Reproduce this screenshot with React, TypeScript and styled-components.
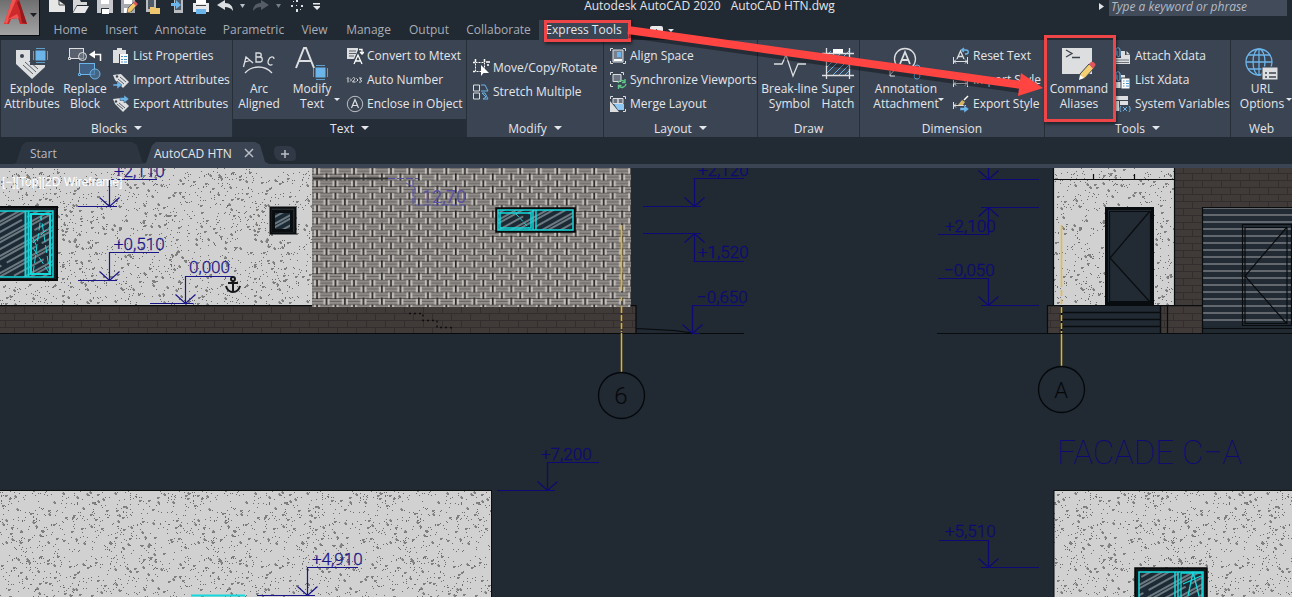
import React from "react";
import styled, { createGlobalStyle } from "styled-components";

const c = {
  frame: "#212932",
  panel: "#3b4453",
  line: "#262e38",
  text: "#e3e6ea",
  dim: "#a9aeb6",
  icon: "#dcdee0",
  blue: "#6cb5ea",
  red: "#ee4549",
  ink: "#1a1687",
  inkDark: "#0d0a75",
  cyan: "#14d9dc",
};

const GlobalStyle = createGlobalStyle`
  * { box-sizing: border-box; }
  html, body, #root { margin: 0; height: 100%; }
  body { background: ${c.frame}; color: ${c.text}; font: 12px/15px "Open Sans", "Noto Sans", sans-serif; overflow: hidden; }
  button, input { font: inherit; color: inherit; border: 0; padding: 0; margin: 0; background: none; }
`;

const Shell = styled.div`
  position: relative;
  display: flex;
  flex-direction: column;
  min-height: 100vh;
`;

const Header = styled.header`
  display: grid;
  grid-template-columns: 44px minmax(0, 1fr);
  height: 40px;
`;

const AppMenu = styled.button`
  width: 40px;
  height: 36px;
  background: linear-gradient(#6f6f6f, #a3a3a3);
  border-right: 1px solid #0c0f12;
  border-bottom: 1px solid #0c0f12;
  svg { display: block; }
`;

const HeaderRows = styled.div`
  display: grid;
  grid-template-rows: 20px 20px;
`;

const TitleBar = styled.div`
  display: flex;
  align-items: flex-start;
`;

const QuickAccess = styled.div`
  flex: 0 0 276px;
  height: 16px;
  overflow: hidden;
  svg { display: block; }
`;

const Title = styled.h1`
  flex: 1;
  display: flex;
  justify-content: center;
  gap: 10px;
  margin: 0;
  font-size: 12px;
  font-weight: 400;
  line-height: 12px;
  white-space: nowrap;
`;

const Search = styled.label`
  display: flex;
  flex: 0 0 193px;
  height: 16px;
`;

const SearchBox = styled.input`
  width: 178px;
  margin-left: 4px;
  padding: 0 2px 4px;
  background: #414b5a;
  font-size: 12px;
  font-style: italic;
  &::placeholder { color: #b4bac3; opacity: 1; }
`;

const MenuTabs = styled.nav`
  display: flex;
`;

const MenuTab = styled.button<{ $w: number; $active?: boolean }>`
  position: relative;
  width: ${(p) => p.$w}px;
  height: 20px;
  line-height: 20px;
  white-space: nowrap;
  color: ${(p) => (p.$active ? c.text : c.dim)};
  background: ${(p) => (p.$active ? c.panel : "none")};
`;

const Highlight = styled.span`
  position: absolute;
  inset: 0 -3px -2px 5px;
  border: 3px solid ${c.red};
  box-shadow: 1px 2px 3px rgba(0, 0, 0, 0.5);
  pointer-events: none;
`;

const CommandHighlight = styled(Highlight)`
  inset: -9px -4px -6px -2px;
`;

const ToggleButton = styled.button`
  display: flex;
  align-items: center;
  gap: 4px;
  margin-left: 20px;
`;

const Ribbon = styled.section`
  display: grid;
  grid-template-columns: 231fr 233fr 136fr 153fr 101fr 184fr 185fr 61fr;
  gap: 1px;
  padding-left: 1px;
  height: 97px;
  background: ${c.line};
`;

const Panel = styled.div`
  display: flex;
  flex-direction: column;
  min-width: 0;
  background: ${c.panel};
`;

const PanelBody = styled.div<{ $pad?: number }>`
  display: flex;
  align-items: center;
  flex: 1;
  padding-left: ${(p) => p.$pad ?? 1}px;
`;

const PanelFooter = styled.button<{ $dark?: boolean }>`
  display: flex;
  align-items: center;
  justify-content: center;
  gap: 7px;
  height: 18px;
  background: ${(p) => (p.$dark ? "#252d38" : "none")};
`;

const Caret = styled.span<{ $size?: number }>`
  border: ${(p) => p.$size ?? 4}px solid transparent;
  border-top-color: currentColor;
  border-bottom: 0;
`;

const BigButton = styled.button<{ $w: number }>`
  position: relative;
  flex: 0 0 ${(p) => p.$w}px;
  height: 72px;
  padding-top: 3px;
  display: flex;
  flex-direction: column;
  align-items: center;
  line-height: 15px;
  white-space: nowrap;
  svg { display: block; }
`;

const SideCaret = styled.span`
  position: absolute;
  right: 0;
  bottom: 15px;
  border: 3px solid transparent;
  border-top-color: currentColor;
  border-bottom: 0;
`;

const SmallList = styled.div<{ $gap?: number }>`
  display: flex;
  flex-direction: column;
  margin-left: ${(p) => p.$gap ?? 4}px;
`;

const SmallButton = styled.button`
  display: flex;
  align-items: center;
  gap: 3px;
  height: 24px;
  white-space: nowrap;
  svg { flex: 0 0 18px; }
`;

const FileBar = styled.div`
  display: flex;
  align-items: flex-end;
  height: 31px;
  padding-left: 12px;
  background: #222a34;
  border-bottom: 4px solid ${c.panel};
`;

const FileTab = styled.button<{ $active?: boolean }>`
  position: relative;
  display: flex;
  align-items: center;
  gap: 12px;
  width: ${(p) => (p.$active ? 127 : 134)}px;
  height: 22px;
  margin-left: ${(p) => (p.$active ? -4 : 0)}px;
  padding-left: ${(p) => (p.$active ? 12 : 18)}px;
  color: ${(p) => (p.$active ? c.text : "#b7bcc4")};
  background: ${(p) => (p.$active ? c.panel : "#2d3540")};
  clip-path: polygon(0 100%, 4px 96%, 10px 15%, 14px 0, calc(100% - 14px) 0, calc(100% - 9px) 12%, calc(100% - 4px) 90%, 100% 100%);
`;

const AddTab = styled.button`
  width: 22px;
  height: 15px;
  margin: 0 0 3px 5px;
  border-radius: 4px 8px 4px 8px;
  background: #303945;
  svg { display: block; margin: auto; }
`;

const Canvas = styled.main`
  flex: 1;
  display: flex;
  min-height: 429px;
  background: ${c.frame};
  svg { display: block; width: 100%; height: auto; min-height: 429px; }
`;

const Annotation = styled.svg`
  position: absolute;
  left: 0;
  top: 0;
  width: 100%;
  height: 140px;
  pointer-events: none;
`;

/* ---------- ribbon icons ---------- */

const Big = ({ children }: { children: React.ReactNode }) => (
  <svg width="34" height="34" viewBox="0 0 34 34" fill="none" stroke={c.icon} strokeWidth="1">{children}</svg>
);
const Small = ({ children }: { children: React.ReactNode }) => (
  <svg width="18" height="18" viewBox="0 0 18 18" fill="none" stroke={c.icon} strokeWidth="1">{children}</svg>
);

const BlueBlock = ({ x, y }: { x: number; y: number }) => (
  <g transform={`translate(${x} ${y})`} stroke={c.blue}>
    <rect x="3" y="3" width="9" height="9" fill={c.blue} />
    <path d="M3 .5h9M3 14.5h9M.5 3v9M14.5 3v9" strokeOpacity=".8" />
  </g>
);

const TagShape = <path d="M1 4l8-1 8 8-6 6-8-8z" fill={c.icon} stroke="none" />;

const I = {
  explode: (
    <Big>
      <path d="M1 3h14v15h15v2L17 32 1 17z" fill={c.icon} stroke="none" />
      <circle cx="7" cy="9" r="2" fill={c.panel} stroke="none" />
      <path d="M8 18l10 9M10 15l11 10M14 14l9 8" stroke="#59606b" />
      <rect x="16" y="1" width="18" height="17" fill={c.panel} stroke="none" />
      <BlueBlock x={18} y={1} />
    </Big>
  ),
  replace: (
    <Big>
      <rect x="1.500" y="1.500" width="14" height="10" fill="#59616e" />
      <circle cx="14.500" cy="9.500" r="4" fill="#6c7480" fillOpacity=".6" />
      <path d="M32.500 14V7.500H25" strokeWidth="1.500" stroke="#fff" />
      <path d="M21 7.500l6-4v8z" fill="#fff" stroke="none" />
      <path d="M0.500 10.500h2v2h-2z" fill={c.panel} />
      <g stroke={c.blue}>
        <rect x="11.500" y="16.500" width="15" height="11" fill="#3f6286" />
        <circle cx="27" cy="27" r="5" fill="#4c7397" fillOpacity=".7" />
        <path d="M10.500 26.500h2v2h-2z" fill={c.panel} />
      </g>
    </Big>
  ),
  arc: (
    <Big>
      <path d="M1.500 20L4 10l7 6M3 15l5-1.500M14 6h3c3 0 3 4 0 4h-3zM14 10h4c3 0 3 5 0 5h-4zM14 6v9M32 12c0-3-4-3-5.500 1s1 6 4 4.500" strokeWidth="1.300" />
      <path d="M3 26C10 18 23 18 30 26" strokeWidth="1.300" />
    </Big>
  ),
  modify: (
    <Big>
      <path d="M1 21L9 1h2l8 20M4 14h12" strokeWidth="2" />
      <BlueBlock x={18} y={18} />
    </Big>
  ),
  breakline: (
    <Big>
      <path d="M1 17h8l4-9 7 21 5-12h8" strokeWidth="1.300" />
    </Big>
  ),
  hatch: (
    <Big>
      <path d="M6 8L10 4M6 14L16 4M6 20L22 4M6 26L28 4M12 28L28 12M18 28L28 18M24 28l4-4" stroke={c.blue} />
      <path d="M1 6.500h32M1 28.500h32M5.500 1v31M28.500 1v31" strokeWidth="1.300" />
      <path d="M12 2h10v4H12z" fill="#fff" stroke="none" />
    </Big>
  ),
  annotation: (
    <Big>
      <circle cx="16" cy="12" r="10.500" strokeWidth="1.300" />
      <path d="M11 17l5-12 5 12M13 13h6" strokeWidth="1.800" />
      <path d="M8 20l-7 8M1 24v5h5" />
      <circle cx="28" cy="21" r="3" stroke={c.blue} />
      <circle cx="28" cy="29" r="3" stroke={c.blue} />
    </Big>
  ),
  command: (
    <Big>
      <path d="M0 1h30v26H0z" fill={c.icon} stroke="none" />
      <path d="M4 3l6 3.500L4 10M10 10.500h8" stroke="#3d434d" strokeWidth="1.300" />
      <path d="M17 33l1-6 9-10 5 4-9 10z" fill="#f6cf72" stroke="#3b4453" />
      <path d="M27 17l2-2c2-1 6 2 4 4l-2 3z" fill="#e0565c" stroke="none" />
      <path d="M17 33l1-5 4 3z" fill="#fff" stroke="none" />
    </Big>
  ),
  url: (
    <Big>
      <g stroke={c.blue} strokeWidth="1.300">
        <circle cx="14" cy="15" r="13" />
        <ellipse cx="14" cy="15" rx="6" ry="13" />
        <path d="M14 2v26M1 15h26M3 8h22M3 22h22" />
      </g>
      <path d="M17 20h16v13H17z" fill={c.icon} stroke="#3b4453" />
      <path d="M20 26h2M20 30h2M24 26h7M24 30h7" stroke="#3d434d" strokeWidth="1.500" />
    </Big>
  ),
  list: (
    <Small>
      <path d="M1 3h4V1h5v2h4v4H7v9H1z" fill={c.icon} stroke="none" />
      <path d="M8 7h8v10H8z" fill="#fff" stroke="none" />
      <path d="M9 9.500h2M9 12.500h2M9 15h2M12 9.500h3M12 12.500h3M12 15h3" stroke="#4b96cf" />
    </Small>
  ),
  imp: (
    <Small>
      {TagShape}
      <circle cx="5" cy="5.500" r="1.200" fill={c.panel} stroke="none" />
      <path d="M6 8l6 5M8 6l6 5" stroke="#59606b" />
      <path d="M1 13h4v-3l5 4-5 4v-3H1z" fill={c.blue} stroke={c.panel} strokeWidth=".5" />
    </Small>
  ),
  exp: (
    <Small>
      {TagShape}
      <circle cx="4" cy="6.500" r="1.200" fill={c.panel} stroke="none" />
      <path d="M5 9l6 5M7 8l6 5" stroke="#59606b" />
      <path d="M8 2.500h4V0l5 4-5 4V5.500H8z" fill={c.blue} stroke={c.panel} strokeWidth=".5" />
    </Small>
  ),
  mtext: (
    <Small>
      <path d="M1 1h11v11H1z" fill={c.icon} stroke="none" />
      <path d="M3 4h7M3 6.500h7M3 9h5" stroke="#5b626d" />
      <path d="M8 17l4-9 4 9M9.500 14h5" stroke={c.panel} strokeWidth="4" />
      <path d="M8 17l4-9 4 9M9.500 14h5M13 2.500h3V6M14 5l2 2 2-2" stroke="#fff" strokeWidth="1.300" />
    </Small>
  ),
  auto: (
    <Small>
      <path d="M1 7.500l1-1v5M6.500 7.500c1-2 3-.5 2 1L6.500 11h3M13 7h2.500L14 9c3 0 1.500 3-1 2M4 7.500L5.500 9 4 10.500M10.500 7.500L12 9l-1.500 1.500" />
    </Small>
  ),
  enclose: (
    <Small>
      <circle cx="9" cy="9" r="7.700" strokeOpacity=".8" />
      <path d="M5.500 13L9 4.500l3.500 8.500M6.800 10.500h4.400" strokeWidth="1.200" />
    </Small>
  ),
  move: (
    <Small>
      <path d="M3.500 3.500h9v9h-9z" stroke="#fff" strokeDasharray="2 1" />
      <path d="M1 3.500h2M3.500 0v3M12.500 0v3M1 12.500h2M16 5v2M14 3h4" stroke="#fff" strokeWidth="1.500" />
      <path d="M9 6v11l2.500-3H17z" fill="#fff" stroke="none" />
    </Small>
  ),
  stretch: (
    <Small>
      <path d="M1.500 2h6v6h-6zM1.500 10h6v6h-6z" />
      <path d="M9 2h4l3 6M9 8h7M10 10h3l3 6h-5l3-2z" stroke={c.blue} />
    </Small>
  ),
  align: (
    <Small>
      <path d="M1.500 4V1.500H4M14 1.500h2.500V4M16.500 14v2.500H14M4 16.500H1.500V14" />
      <path d="M4 3h10v12H4z" fill="#77808c" />
      <path d="M8 5h4v5H8z" fill={c.blue} stroke="none" />
      <path d="M5 12h8v2H5z" fill="#fff" stroke="none" />
    </Small>
  ),
  sync: (
    <Small>
      <path d="M1.500 4V1.500H4M12 1.500h2.500V4M4 15.500H1.500V13" />
      <path d="M4 3.500h8v7H4z" fill="#6c7581" />
      <path d="M9 12a4 4 0 0 1 7-1M16 8v3.500h-3M17 13a4 4 0 0 1-7 2M9.500 18v-3.500h3" stroke="#5fc588" strokeWidth="1.400" />
    </Small>
  ),
  merge: (
    <Small>
      <path d="M1.500 4V1.500H4M14 1.500h2.500V4M16.500 14v2.500H14" />
      <path d="M4 3.500h5v5H4zM9 3.500h5v5H9z" fill="#6c7581" />
      <path d="M5 9h10v6H9z" fill="#8ec8f2" stroke="none" />
      <path d="M1 6l9 11H1z" fill={c.icon} stroke="none" />
    </Small>
  ),
  reset: (
    <Small>
      <path d="M1.500 10v7M15.500 10v7M2 14.500h13M4 12.500l-2 2 2 2M13 12.500l2 2-2 2" />
      <path d="M5 12l3.500-8L12 12M6 9.500h5" strokeWidth="1.300" />
      <path d="M10 3h4c3 0 3 4 0 4h-1M12 1l-2.500 2L12 5" stroke={c.blue} strokeWidth="1.300" />
    </Small>
  ),
  impStyle: (
    <Small>
      <path d="M1.500 9v7M15.500 9v7M2 12.500h13M4 10.500l-2 2 2 2M13 10.500l2 2-2 2" />
    </Small>
  ),
  expStyle: (
    <Small>
      <path d="M1.500 7v7M2 10.500h12M4 8.500l-2 2 2 2" />
      <path d="M6 10l4-5 3 2-2 3z" fill="#d5b563" stroke="none" />
      <path d="M12 5l4-4" stroke="#fff" strokeWidth="1.500" />
      <path d="M8 12.500h4V10l5 4-5 4v-2.500H8z" fill={c.blue} stroke={c.panel} strokeWidth=".5" />
    </Small>
  ),
  attach: (
    <Small>
      <path d="M7 4h4v4h5v9H1v-6h6z" fill={c.icon} stroke="none" />
      <path d="M12.500 4l3.500 3.500h-3.500z" fill={c.icon} stroke="none" />
      <path d="M2 13h13M2 15.500h13" stroke="#6b727d" />
      <path d="M2 8V3c0-3 4-3 4 0v5c0 2-3 2-3 0V4" stroke={c.blue} />
    </Small>
  ),
  listX: (
    <Small>
      <path d="M7 4h4v4h5v9H1v-6h6z" fill={c.icon} stroke="none" />
      <path d="M7 7h9v11H7z" fill="#fff" stroke="#3b4453" />
      <path d="M9 10h1.500M9 12.500h1.500M9 15h1.500M12 10h3M12 12.500h3M12 15h3" stroke="#4b96cf" />
      <path d="M2 8V3c0-3 4-3 4 0v5c0 2-3 2-3 0V4" stroke={c.blue} />
    </Small>
  ),
  sysvar: (
    <Small>
      <path d="M1 1h13v4H1zM1 6h4v10H1zM6 6h8v4H6z" fill={c.icon} stroke="none" />
      <path d="M7 11c-1.500 2-1.500 4 0 6M15 11c1.500 2 1.500 4 0 6M9 12l4 4M13 12l-4 4" stroke={c.blue} />
    </Small>
  ),
};

const AppLogo = () => (
  <svg width="39" height="35" viewBox="0 0 39 35">
    <path d="M4 24L12 0h7l8 24h-7l-2-6-7 1-2 5z" fill="#cf2a2b" />
    <path d="M12 0h4L8 19l9-5 2 4-10 1-2 5-3-1z" fill="#ee5451" />
    <path d="M17 3l3 8 2 12 5 1L19 0z" fill="#96191d" />
    <path d="M30 13h7l-3.500 4z" fill="#1c1f24" />
  </svg>
);

const QuickIcons = () => (
  <svg width="276" height="16" viewBox="44 0 276 16">
    <path d="M49 0h9l7 5v7H49z" fill="#e6e6e6" /><path d="M59 0v5h6" stroke="#444" fill="none" />
    <path d="M73 0h7l1 2h6v3H77l-4 7z" fill="#d6d6d6" /><path d="M77 6h12l-4 7H73z" fill="#e8e8e8" />
    <path d="M97 0h16v13H97z" fill="#c6c8cb" /><path d="M101 0h8v4h-8z" fill="#fff" /><path d="M101 8h8v5h-8z" fill="#2d3440" /><path d="M102 9h7v5h-7z" fill="#fff" />
    <path d="M121 0h14v13h-14z" fill="#a6aab0" /><path d="M124 0h8v4h-8z" fill="#fff" /><path d="M124 8h7v5h-7z" fill="#fff" /><path d="M127 13l1-5 6-6 3 3-6 7z" fill="#f4c76c" stroke="#212932" strokeWidth=".6" /><path d="M133 3l2-2 3 3-2 2z" fill="#df585c" />
    <path d="M146 0h10v12h-10z" fill="#b9bcc1" /><path d="M148 0h6v9h-6z" fill="#515a67" /><path d="M150 7h4l1 1h5v6h-10z" fill="#efc76f" />
    <path d="M174 0h9v13h-9z" fill="#b9bcc1" /><path d="M175 0h6v10h-6z" fill="#515a67" /><path d="M171 3h5V0l5 5-5 4V6h-5z" fill={c.blue} />
    <path d="M193 3h16v9h-16z" fill="#e5e7e9" /><path d="M196 0h10v4h-10z" fill="#fff" /><path d="M196 9h10v5h-10z" fill={c.blue} /><path d="M196 5h10v1h-10z" fill="#444" />
    <path d="M217 5l8-5v3c5 0 8 3 8 8-2-3-5-4-8-4v3z" fill="#dcdfe2" />
    <path d="M240 4h5l-2.500 4z" fill="#b8bec6" />
    <path d="M269 5l-8-5v3c-5 0-8 3-8 8 2-3 5-4 8-4v3z" fill="#555c66" />
    <path d="M276 4h5l-2.500 4z" fill="#777e88" />
    <path d="M291 5h2v2h-2zM301 5h2v2h-2zM296 0h2v2h-2zM296 9h2v3h-2zM296 5h1v1h-1zM293 1h1v1h-1zM300 9h1v1h-1z" fill="#e0e3e6" />
    <path d="M313 3h8v1.500h-8zM313 6h8l-4 4z" fill="#e8eaec" />
  </svg>
);

/* ---------- drawing area ---------- */

const random = (seed: number) => () => {
  seed = (seed + 0x6d2b79f5) | 0;
  let t = Math.imul(seed ^ (seed >>> 15), 1 | seed);
  t = (t + Math.imul(t ^ (t >>> 7), 61 | t)) ^ t;
  return ((t ^ (t >>> 14)) >>> 0) / 4294967296;
};

const TILE = 192;
const makeSpecks = () => {
  const r = random(42);
  let fine = "";
  let grain = "";
  for (let i = 0; i < 1250; i++) {
    fine += `M${Math.floor(r() * TILE)} ${Math.floor(r() * TILE)}h1v1h-1z`;
  }
  for (let i = 0; i < 290; i++) {
    const x = Math.floor(r() * (TILE - 5)) + 1;
    const y = Math.floor(r() * (TILE - 5)) + 1;
    grain += r() > 0.5 ? `M${x} ${y}h3v1h-1v1h-2z` : `M${x + 1} ${y}h1v1h1v2h-2v-1h-1z`;
  }
  return { fine, grain };
};
const specks = makeSpecks();

const CadText = styled.text<{ $size?: number; $weight?: number }>`
  font-family: Roboto, sans-serif;
  font-weight: ${(p) => p.$weight ?? 300};
  font-size: ${(p) => p.$size ?? 17}px;
  white-space: pre;
`;

const ViewLabel = styled.text`
  font: 12px "Liberation Sans", Arial, sans-serif;
`;

type LevelProps = { x: number; y: number; edge: number; from: number; to: number; label?: string; tx?: number; ty?: number; end: number; dark?: boolean };

/* Elevation mark: ground line at `y`, stem to `edge`, shelf line ending at `end`. */
const Level = ({ x, y, edge, from, to, label, tx, ty, end, dark }: LevelProps) => {
  const s = edge < y ? -1 : 1;
  const color = dark ? c.inkDark : c.ink;
  return (
    <g>
      <path d={`M${from} ${y}H${to}M${x} ${y}V${edge}H${end}M${x - 10} ${y + 9 * s}L${x} ${y}L${x + 10} ${y + 9 * s}`} stroke={color} fill="none" strokeWidth="1.200" />
      {label && <CadText x={tx} y={ty} fill={color} stroke={color} strokeWidth=".3">{label}</CadText>}
    </g>
  );
};

type BoxProps = { x: number; y: number; w: number; h: number };

const GlassWindow = ({ x, y, w, h, split, frame = 4 }: BoxProps & { split: number; frame?: number }) => (
  <g fill="none">
    <rect x={x} y={y} width={w} height={h} fill="#11181b" stroke="#050707" strokeWidth="1.500" />
    <rect x={x + frame} y={y + frame} width={w - 2 * frame} height={h - 2 * frame} fill="url(#glass)" stroke={c.cyan} strokeWidth="1.500" />
    <path d={`M${split - 2} ${y + frame}v${h - 2 * frame}M${split + 1} ${y + frame}v${h - 2 * frame}`} stroke={c.cyan} strokeWidth="1.500" />
  </g>
);

const Drawing = () => (
  <svg role="img" aria-label="Facade drawing">
    <defs>
      <pattern id="plaster" width={TILE} height={TILE} patternUnits="userSpaceOnUse">
        <rect width={TILE} height={TILE} fill="#d1d1d1" />
        <path d={specks.fine} fill="#6e6e6e" />
        <path d={specks.grain} fill="#808080" />
      </pattern>
      <pattern id="weave" width="55" height="37" patternUnits="userSpaceOnUse" patternTransform="translate(313 0) scale(.336)">
        <rect width="55" height="37" fill="#918d8a" />
        <path d="M0 0h55M0 18.500h55M0 37h55" stroke="#4d4947" strokeWidth="3" />
        <path d="M20 9h43M-8 9h13M48 27h15M-8 27h43" stroke="#67625f" strokeWidth="3" />
        <path d="M6 1v17M18 1v17M34 19v17M46 19v17" stroke="#c6c1bd" strokeWidth="6" />
        <path d="M12 -2v22M40 16v23" stroke="#1b1b1b" strokeWidth="4" />
      </pattern>
      <pattern id="brick" width="19" height="14" patternUnits="userSpaceOnUse" patternTransform="translate(0 138)">
        <rect width="19" height="14" fill="#403a39" />
        <path d="M0 .5h19M0 7.500h19M5.500 0v7M14.500 7v7" stroke="#332e2d" />
      </pattern>
      <pattern id="shutter" width="20" height="7" patternUnits="userSpaceOnUse" patternTransform="translate(0 39)">
        <rect width="20" height="7" fill="#222a33" />
        <path d="M0 1h20" stroke="#62686e" strokeWidth="2" />
      </pattern>
      <pattern id="glass" width="40" height="15" patternUnits="userSpaceOnUse" patternTransform="rotate(-29)">
        <rect width="40" height="15" fill="#1b2a35" />
        <path d="M0 2h40M0 5h40M0 11h34" stroke="#bcc7cd" strokeWidth="1.200" />
      </pattern>
    </defs>

    <rect x="0" y="0" width="312" height="137" fill="url(#plaster)" />
    <rect x="0" y="137" width="636" height="28" fill="url(#brick)" />
    <rect x="312" y="0" width="319" height="139" fill="url(#weave)" />
    <path d="M0 137.500H312M631 137.500h5V165M0 165.500H744M636 160.500l38 2 22 3" stroke="#07090b" fill="none" strokeWidth="1.200" />
    <path d="M409 145.500h14v7h14v7h14v4" stroke="#0c0c0c" strokeWidth="1.500" strokeDasharray="2 3" fill="none" />

    <g fill="none">
      <rect x="-10" y="39" width="67" height="73" fill="#151b1e" stroke="#080a0b" strokeWidth="2" />
      <rect x="-10" y="43" width="63" height="66" fill="url(#glass)" stroke={c.cyan} strokeWidth="1.500" />
      <path d="M25.500 43v66M28.500 43v66" stroke={c.cyan} strokeWidth="2" />
      <rect x="31" y="46" width="19" height="60" stroke={c.cyan} strokeWidth="2" />
      <path d="M33 106L41 48l9 58M33 80l17 26M33 75l17-17M33 70l4 9" stroke={c.cyan} strokeDasharray="8 3" />
      <rect x="270.500" y="39.500" width="25" height="26" fill="#252b2f" stroke="#090b0c" strokeWidth="2" />
      <rect x="273.500" y="43.500" width="18" height="19" fill="url(#glass)" stroke="#0b0e10" strokeWidth="3" />
    </g>

    <path d="M313 10.500H388" stroke="#333" strokeWidth="2" />
    <path d="M388 10.500h30M406 15l9 5v17h50M413 12v24" stroke="#554fa0" fill="none" strokeDasharray="7 2" />
    <CadText x="422" y="35" fill="#5a529f" $weight={400} $size={18}>12,70</CadText>

    <GlassWindow x={496} y={40} w={79} h={24} split={535} frame={2} />
    <rect x="500" y="45" width="31" height="15" fill="none" stroke={c.cyan} strokeWidth="1.500" />
    <path d="M516 46l13 14" stroke={c.cyan} strokeDasharray="4 2" />

    <g fill="none" stroke="#e2b51c" strokeWidth="1.500">
      <path d="M621.500 57v82M1061.500 57v62" strokeDasharray="66 6 4 5" />
      <path d="M621.500 139v25" strokeDasharray="6 2" />
      <path d="M621.500 165v40M1061.500 165v33" />
    </g>
    <g fill="none" stroke="#05080b" strokeWidth="1.300">
      <circle cx="621.500" cy="227.500" r="23" />
      <circle cx="1061.500" cy="221.500" r="23" />
    </g>
    <g fill="#05080b" textAnchor="middle">
      <CadText x="621" y="236" $size={24}>6</CadText>
      <CadText x="1061" y="230" $size={22}>A</CadText>
    </g>

    <Level x={109.5} y={38.5} edge={11.5} from={78} to={117} end={157} label="+2,110" tx={114} ty={9} />
    <Level x={109.5} y={112.5} edge={84.5} from={78} to={117} end={159} label="+0,510" tx={114} ty={82} />
    <Level x={185.5} y={135.5} edge={108.5} from={150} to={193} end={233} label="0,000" tx={189} ty={105} />
    <Level x={694.5} y={38.500} edge={10.500} from={643} to={701} end={744} label="+2,120" tx={698} ty={8} dark />
    <Level x={694.5} y={65.500} edge={93.500} from={643} to={701} end={744} label="+1,520" tx={698} ty={90} dark />
    <Level x={692.5} y={165.500} edge={137.500} from={692} to={700} end={744} label="−0,650" tx={697} ty={135} dark />
    <Level x={988.5} y={11.5} edge={-5} from={981} to={1039} end={989} dark />
    <Level x={988.5} y={39.5} edge={66.5} from={981} to={1039} end={938} label="+2,100" tx={945} ty={64} dark />
    <Level x={988.5} y={137.5} edge={110.5} from={981} to={1039} end={938} label="−0,050" tx={944} ty={108} dark />
    <Level x={547.5} y={322.5} edge={294.5} from={497} to={555} end={599} label="+7,200" tx={541} ty={292} dark />
    <Level x={988.5} y={399.5} edge={372.5} from={981} to={1039} end={939} label="+5,510" tx={945} ty={369} dark />

    <ViewLabel x="2" y="18" fill="#fff">[−][Top][2D Wireframe]</ViewLabel>

    <g fill="none" stroke="#15181b" strokeWidth="2">
      <circle cx="233" cy="111" r="2" />
      <path d="M233 113v11M228 115h10M226 118c1 4 4 6 7 6s6-2 7-6" />
    </g>

    <rect x="1054" y="0" width="120" height="137" fill="url(#plaster)" />
    <path d="M1061.500 57v62" stroke="#e8bd2a" strokeWidth="1.500" />
    <path d="M1061.500 122v14" stroke="#e8bd2a" strokeWidth="1.500" strokeDasharray="6 3" />
    <path d="M1054 11.500h120M1093.500 6v5M1134.500 6v5" stroke="#0b0b0b" strokeWidth="1.200" />
    <rect x="1174" y="0" width="200" height="137" fill="url(#brick)" />
    <path d="M1047 137h14v28h-14zM1161 137h41v28h-41z" fill="url(#brick)" />
    <rect x="1202" y="39" width="180" height="126" fill="url(#shutter)" />
    <rect x="1202" y="158" width="180" height="7" fill="#202830" />
    <g fill="none" stroke="#090c0f" strokeWidth="1.200">
      <path d="M1053.500 0v137M1174.500 0v137M1047 137.500h155M1047.500 137v28M1167.500 137v28M1202.500 165V39.500H1400M1202 160.500h200" />
      <path d="M1061 144.500h100M1061 151.500h100M1061 158.500h100M1160.500 137v28M1061.500 137v28" strokeWidth="1.500" />
      <path d="M937 165.500H1400" strokeWidth="1.200" />
      <rect x="1106.500" y="40.500" width="46" height="95" fill="#222a33" strokeWidth="3" />
      <path d="M1109.500 43.500h41v90h-41zM1150 43l-40 47 40 44" />
      <path d="M1242.500 56.500h49v101h-49zM1245 59.500h42v96h-42zM1287 59l-42 49 42 48" strokeWidth="1.200" />
    </g>
    <path d="M1061.500 139v26" stroke="#e2b51c" strokeWidth="1.500" strokeDasharray="6 2" />

    <CadText x="1057" y="296" fill={c.inkDark} $size={33} $weight={100}>FACADE C−A</CadText>

    <rect x="-1" y="322.500" width="492.500" height="600" fill="url(#plaster)" stroke="#0b0d0e" />
    <rect x="1054" y="322.500" width="500" height="600" fill="url(#plaster)" stroke="#0b0d0e" />
    <Level x={307.500} y={427.500} edge={399.500} from={257} to={315} end={358} label="+4,910" tx={312} ty={397} />
    <path d="M191 427.500h54" stroke={c.cyan} strokeWidth="2" />
    <GlassWindow x={1135} y={400} w={72} h={80} split={1177} frame={4} />
    <path d="M1181 405v40M1202 405v40M1181 405h21M1188 428l5-24 6 24M1183 416l18-8" stroke={c.cyan} strokeWidth="1.300" fill="none" />
  </svg>
);

/* ---------- ribbon content ---------- */

const menu: [string, number][] = [
  ["Home", 53], ["Insert", 49], ["Annotate", 69], ["Parametric", 77], ["View", 45],
  ["Manage", 63], ["Output", 58], ["Collaborate", 81],
];

type Action = [React.ReactNode, string];

const Actions = ({ items, gap }: { items: Action[]; gap?: number }) => (
  <SmallList $gap={gap}>
    {items.map(([icon, label]) => (
      <SmallButton key={label}>{icon}{label}</SmallButton>
    ))}
  </SmallList>
);

type LargeProps = { icon: React.ReactNode; lines: [string, string]; w: number; caret?: boolean; children?: React.ReactNode };
const Large = ({ icon, lines, w, caret, children }: LargeProps) => (
  <BigButton $w={w}>
    {icon}
    <span>{lines[0]}</span>
    <span>{lines[1]}</span>
    {caret && <SideCaret />}
    {children}
  </BigButton>
);

type GroupProps = { name: string; pad?: number; menu?: boolean; dark?: boolean; children: React.ReactNode };
const Group = ({ name, pad, menu: hasMenu, dark, children }: GroupProps) => (
  <Panel>
    <PanelBody $pad={pad}>{children}</PanelBody>
    <PanelFooter $dark={dark}>{name}{hasMenu && <Caret />}</PanelFooter>
  </Panel>
);

export default function App() {
  return (
    <Shell>
      <GlobalStyle />
      <Header>
        <AppMenu aria-label="Application menu"><AppLogo /></AppMenu>
        <HeaderRows>
          <TitleBar>
            <QuickAccess><QuickIcons /></QuickAccess>
            <Title><span>Autodesk AutoCAD 2020</span><span>AutoCAD HTN.dwg</span></Title>
            <Search aria-label="Search">
              <svg width="6" height="12"><path d="M0 3l5 3.500L0 10z" fill="#dfe2e6" /></svg>
              <SearchBox type="text" placeholder="Type a keyword or phrase" />
            </Search>
          </TitleBar>
          <MenuTabs>
            {menu.map(([label, w]) => <MenuTab key={label} $w={w}>{label}</MenuTab>)}
            <MenuTab $w={89} $active>Express Tools<Highlight /></MenuTab>
            <ToggleButton aria-label="Minimize ribbon">
              <svg width="16" height="8"><rect x="2" y="0" width="13" height="11" rx="2" fill="#e6e8ea" /><path d="M6 6l2.500-3L11 6z" fill="#333" /></svg>
              <Caret $size={3} />
            </ToggleButton>
          </MenuTabs>
        </HeaderRows>
      </Header>

      <Ribbon>
        <Group name="Blocks" menu>
          <Large icon={I.explode} lines={["Explode", "Attributes"]} w={60} />
          <Large icon={I.replace} lines={["Replace", "Block"]} w={46} />
          <Actions items={[[I.list, "List Properties"], [I.imp, "Import Attributes"], [I.exp, "Export Attributes"]]} />
        </Group>
        <Group name="Text" menu dark>
          <Large icon={I.arc} lines={["Arc", "Aligned"]} w={50} />
          <Large icon={I.modify} lines={["Modify", "Text"]} w={56} caret />
          <Actions gap={6} items={[[I.mtext, "Convert to Mtext"], [I.auto, "Auto Number"], [I.enclose, "Enclose in Object"]]} />
        </Group>
        <Group name="Modify" menu>
          <Actions items={[[I.move, "Move/Copy/Rotate"], [I.stretch, "Stretch Multiple"]]} />
        </Group>
        <Group name="Layout" menu>
          <Actions items={[[I.align, "Align Space"], [I.sync, "Synchronize Viewports"], [I.merge, "Merge Layout"]]} />
        </Group>
        <Group name="Draw" pad={3}>
          <Large icon={I.breakline} lines={["Break-line", "Symbol"]} w={57} />
          <Large icon={I.hatch} lines={["Super", "Hatch"]} w={40} />
        </Group>
        <Group name="Dimension" pad={8}>
          <Large icon={I.annotation} lines={["Annotation", "Attachment"]} w={76} caret />
          <Actions gap={8} items={[[I.reset, "Reset Text"], [I.impStyle, "Import Style"], [I.expStyle, "Export Style"]]} />
        </Group>
        <Group name="Tools" menu>
          <Large icon={I.command} lines={["Command", "Aliases"]} w={66}><CommandHighlight /></Large>
          <Actions gap={2} items={[[I.attach, "Attach Xdata"], [I.listX, "List Xdata"], [I.sysvar, "System Variables"]]} />
        </Group>
        <Group name="Web">
          <Large icon={I.url} lines={["URL", "Options"]} w={60} caret />
        </Group>
      </Ribbon>

      <FileBar>
        <FileTab>Start</FileTab>
        <FileTab $active>
          AutoCAD HTN
          <svg width="10" height="10" stroke="#b9bec6" strokeWidth="1.500"><path d="M1 1l8 8M9 1L1 9" /></svg>
        </FileTab>
        <AddTab aria-label="New tab">
          <svg width="10" height="10" stroke="#b9bec6" strokeWidth="1.500"><path d="M5 1v8M1 5h8" /></svg>
        </AddTab>
      </FileBar>

      <Canvas><Drawing /></Canvas>

      <Annotation viewBox="0 0 1292 140" preserveAspectRatio="none">
        <path d="M629 34L1020 89" stroke="#000" strokeOpacity=".35" strokeWidth="8" />
        <path d="M628 30L1022 85" stroke="#ff4441" strokeWidth="8" />
        <path d="M1021 73L1043 88L1018 96z" fill="#ff4441" />
      </Annotation>
    </Shell>
  );
}
